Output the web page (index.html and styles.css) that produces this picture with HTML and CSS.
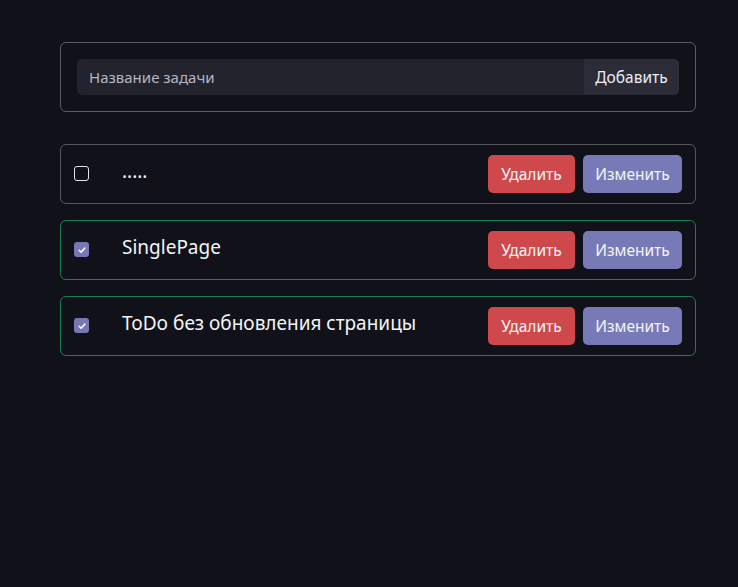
FILE: index.html
```html
<!DOCTYPE html>
<html lang="ru">
<head>
<meta charset="utf-8">
<link rel="stylesheet" href="styles.css">
</head>
<body>
<main class="wrap">
  <form class="add-card">
    <div class="add-row">
      <input class="add-input" type="text" placeholder="Название задачи">
      <button class="add-btn" type="button">Добавить</button>
    </div>
  </form>
  <ul class="list">
    <li class="item">
      <span class="check"></span>
      <span class="title">.....</span>
      <button class="btn btn-del">Удалить</button>
      <button class="btn btn-edit">Изменить</button>
    </li>
    <li class="item done">
      <span class="check on"><svg viewBox="0 0 16 16" width="10" height="10"><path d="M3.5 8.5l3 3 6-6.5" fill="none" stroke="#fff" stroke-width="2.4" stroke-linecap="round" stroke-linejoin="round"/></svg></span>
      <span class="title">SinglePage</span>
      <button class="btn btn-del">Удалить</button>
      <button class="btn btn-edit">Изменить</button>
    </li>
    <li class="item done">
      <span class="check on"><svg viewBox="0 0 16 16" width="10" height="10"><path d="M3.5 8.5l3 3 6-6.5" fill="none" stroke="#fff" stroke-width="2.4" stroke-linecap="round" stroke-linejoin="round"/></svg></span>
      <span class="title">ToDo без обновления страницы</span>
      <button class="btn btn-del">Удалить</button>
      <button class="btn btn-edit">Изменить</button>
    </li>
  </ul>
</main>
</body>
</html>
```
FILE: styles.css
```css
* { box-sizing: border-box; }
html, body { margin: 0; padding: 0; }
body {
  background: #111219;
  font-family: "Noto Sans", "Open Sans", sans-serif;
  color: #eceef3;
  width: 738px;
  height: 587px;
}
.wrap {
  padding: 42px 42px 0 60px;
  width: 738px;
}
.add-card {
  width: 636px;
  height: 70px;
  border: 1px solid #5a5b60;
  border-radius: 6px;
  padding: 16px 16px;
  margin: 0;
}
.add-row {
  display: flex;
  height: 36px;
}
.add-input {
  flex: 1;
  height: 36px;
  border: none;
  outline: none;
  background: #22232d;
  border-radius: 5px 0 0 5px;
  padding: 0 12px;
  font: inherit;
  font-size: 15px;
  color: #eceef3;
}
.add-input::placeholder { color: #b4b6c0; }
.add-btn {
  width: 95px;
  height: 36px;
  border: none;
  background: #2b2c37;
  color: #eceef3;
  border-radius: 0 5px 5px 0;
  font: inherit;
  font-size: 15.5px;
  padding: 0;
}
.list {
  list-style: none;
  margin: 32px 0 0;
  padding: 0;
  display: flex;
  flex-direction: column;
  gap: 16px;
  width: 636px;
}
.item {
  display: flex;
  align-items: center;
  height: 60px;
  border: 1px solid #55565c;
  border-radius: 6px;
  padding: 0 13px 0 13px;
}
.item.done { border-color: #19804a; }
.check {
  width: 15px;
  height: 15px;
  border: 1.5px solid #e4e4ea;
  border-radius: 3px;
  display: flex;
  align-items: center;
  justify-content: center;
  flex: none;
  margin-top: -1px;
}
.check.on {
  background: #7777b5;
  border: none;
}
.title {
  flex: 1;
  margin-left: 33px;
  font-size: 19px;
  margin-top: -6px;
  color: #f3f4f8;
}
.btn {
  height: 38px;
  border: none;
  border-radius: 5px;
  color: #f4f4f8;
  font: inherit;
  font-size: 15.5px;
  padding: 0;
}
.btn-del { width: 87px; background: #cf494c; }
.btn-edit { width: 99px; background: #777ab6; margin-left: 8px; }
```
